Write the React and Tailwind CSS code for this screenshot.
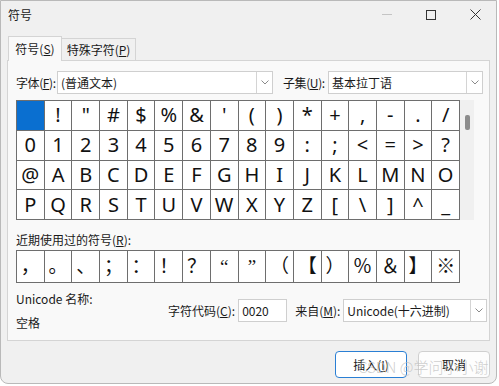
import React from 'react';

const ui = { fontFamily: '"Noto Sans CJK SC", "Noto Sans", sans-serif' };
const glyph = { fontFamily: '"Noto Sans", "Open Sans", sans-serif' };
const recentFont = { fontFamily: '"Liberation Serif", "Noto Sans CJK SC", serif' };

const grid = [
  [' ', '!', '"', '#', '$', '%', '&', "'", '(', ')', '*', '+', ',', '-', '.', '/'],
  ['0', '1', '2', '3', '4', '5', '6', '7', '8', '9', ':', ';', '<', '=', '>', '?'],
  ['@', 'A', 'B', 'C', 'D', 'E', 'F', 'G', 'H', 'I', 'J', 'K', 'L', 'M', 'N', 'O'],
  ['P', 'Q', 'R', 'S', 'T', 'U', 'V', 'W', 'X', 'Y', 'Z', '[', '\\', ']', '^', '_'],
];

const recent = ['，', '。', '、', '；', '：', '！', '？', '“', '”', '（', '【', '）', '％', '＆', '】', '※'];

function Chevron() {
  return (
    <div className="flex h-full w-[16px] shrink-0 items-center justify-center border-l border-[#d4d4d4]">
      <svg width="8" height="5" viewBox="0 0 8 5" fill="none">
        <path d="M0.5 0.5 L4 4 L7.5 0.5" stroke="#8a8a8a" strokeWidth="1" />
      </svg>
    </div>
  );
}

function Select({ value, className }) {
  return (
    <div className={`flex h-[23px] shrink-0 items-center border border-[#cfcfcf] bg-white ${className}`}>
      <span className="flex-1 truncate whitespace-nowrap pl-[3px] text-[12px] text-[#1a1a1a]">{value}</span>
      <Chevron />
    </div>
  );
}

export default function App() {
  return (
    <div className="relative h-[386px] w-[499px] overflow-hidden bg-white" style={ui}>
      <div className="flex h-[384px] w-[497px] flex-col rounded-b-[8px] border border-[#b9b9b9] bg-[#f0f0f0]">
        {/* title bar */}
        <div className="flex h-[35px] items-start pl-[7px] pt-[5px]">
          <span className="text-[12px] text-[#1a1a1a]">符号</span>
          <div className="ml-auto flex items-center gap-[34px] pr-[15px] pt-[3px]">
            <div className="h-px w-[10px] bg-[#c4c4c4]" />
            <div className="h-[10px] w-[10px] border border-[#333]" />
            <svg width="11" height="11" viewBox="0 0 11 11">
              <path d="M0.5 0.5 L10.5 10.5 M10.5 0.5 L0.5 10.5" stroke="#333" strokeWidth="1" />
            </svg>
          </div>
        </div>

        {/* tabs */}
        <div className="relative z-10 flex items-end pl-[7px]">
          <div className="-mb-px flex h-[25px] w-[54px] items-center justify-center whitespace-nowrap border border-b-0 border-[#d4d4d4] bg-[#f9f9f9] text-[12px] text-[#1a1a1a]">
            符号(<u>S</u>)
          </div>
          <div className="flex h-[22px] w-[74px] items-center justify-center whitespace-nowrap border border-l-0 border-b-0 border-[#d4d4d4] bg-[#f0f0f0] text-[12px] text-[#1a1a1a]">
            特殊字符(<u>P</u>)
          </div>
        </div>

        {/* panel */}
        <div className="mx-[6px] flex h-[281px] flex-col border border-[#d4d4d4] bg-[#f9f9f9] pl-[8px] pt-[10px]">
          <div className="flex items-center whitespace-nowrap text-[12px] text-[#1a1a1a]">
            <span className="w-[41px] shrink-0 tracking-[-0.4px]">字体(<u>F</u>):</span>
            <Select value="(普通文本)" className="w-[216px]" />
            <span className="ml-[10px] w-[45px] shrink-0 tracking-[-0.4px]">子集(<u>U</u>):</span>
            <Select value="基本拉丁语" className="w-[155px]" />
          </div>

          <div className="mt-[6px] flex">
            <div
              className="grid h-[120px] w-[444px] grid-cols-[repeat(16,minmax(0,1fr))] grid-rows-4 gap-px border border-[#6e6e6e] bg-[#6e6e6e]"
              style={glyph}
            >
              {grid.flat().map((c, i) => (
                <div
                  key={i}
                  className={`flex items-center justify-center text-[20px] leading-none text-[#111] ${i === 0 ? 'bg-[#0a6fd0]' : 'bg-white'}`}
                >
                  {c}
                </div>
              ))}
            </div>
            <div className="flex h-[120px] w-[14px] justify-center bg-[#f0f0f0] pt-[15px]">
              <div className="h-[15px] w-[5px] rounded-[2px] bg-[#8c8c8c]" />
            </div>
          </div>

          <div className="mt-[13px] whitespace-nowrap text-[12px] leading-[14px] text-[#1a1a1a]">近期使用过的符号(<u>R</u>):</div>
          <div
            className="mt-[3px] grid h-[33px] w-[444px] grid-cols-[repeat(16,minmax(0,1fr))] gap-px border border-[#6e6e6e] bg-[#6e6e6e]"
            style={recentFont}
          >
            {recent.map((c, i) => (
              <div key={i} className="flex items-center justify-center bg-white text-[19px] leading-none text-[#111]">
                {c}
              </div>
            ))}
          </div>

          <div className="mt-[7px] flex items-start whitespace-nowrap text-[12px] text-[#1a1a1a]">
            <div className="flex w-[152px] shrink-0 flex-col gap-[6px]">
              <span>Unicode 名称:</span>
              <span>空格</span>
            </div>
            <div className="mt-[9px] flex items-center">
              <span>字符代码(<u>C</u>):</span>
              <div className="ml-[3px] flex h-[23px] w-[49px] items-center border border-[#cfcfcf] bg-white pl-[3px]">0020</div>
              <span className="ml-[8px]">来自(<u>M</u>):</span>
              <Select value="Unicode(十六进制)" className="ml-[3px] w-[144px]" />
            </div>
          </div>
        </div>

        {/* buttons */}
        <div className="mt-[10px] flex justify-end gap-[11px] pr-[6px]">
          <button className="h-[27px] w-[72px] rounded-[4px] border border-[#2a7fd4] bg-white text-[12px] text-[#1a1a1a]">
            插入(<u>I</u>)
          </button>
          <button className="h-[27px] w-[72px] rounded-[4px] border border-[#d0d0d0] bg-[#fdfdfd] text-[12px] text-[#1a1a1a]">
            取消
          </button>
        </div>
      </div>

      {/* watermark */}
      <div className="pointer-events-none absolute left-[358px] top-[356px] whitespace-nowrap text-[15px] font-light text-[#c2c2c2]/80">
        CSDN @学问小小谢
      </div>
    </div>
  );
}
